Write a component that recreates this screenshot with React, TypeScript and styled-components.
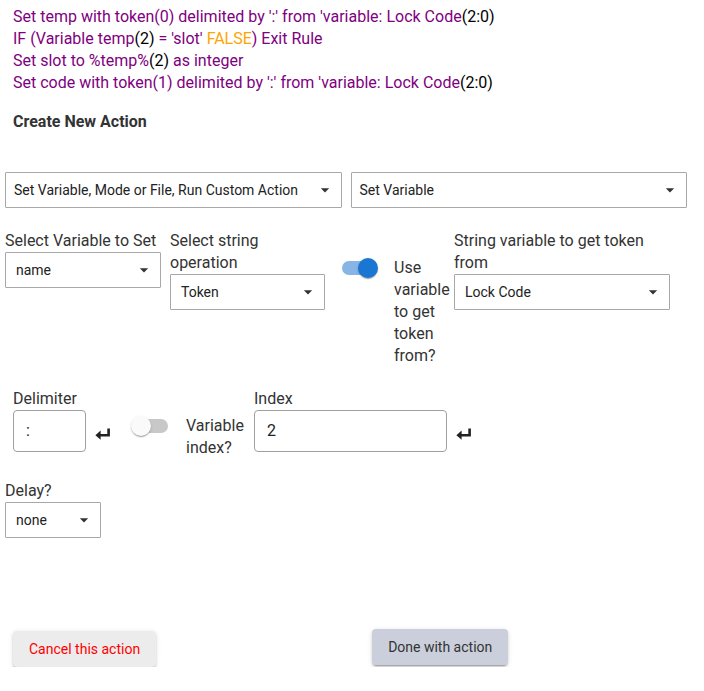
import React from "react";
import styled, { createGlobalStyle } from "styled-components";

const Global = createGlobalStyle`
  body {
    margin: 0;
    background: #ffffff;
    font-family: Roboto, "Liberation Sans", Arial, sans-serif;
    color: #333333;
  }
`;

const Page = styled.div`
  width: 682px;
  padding: 5.5px 0 0 5px;
`;

const Rules = styled.div`
  padding-left: 8px;
  font-size: 16px;
  line-height: 22.3px;
  color: purple;
`;

const Plain = styled.span`
  color: #000000;
`;

const Warn = styled.span`
  color: orange;
`;

const Heading = styled.div`
  margin: 16.3px 0 0 8px;
  font-size: 16px;
  line-height: 22px;
  font-weight: 700;
  color: #333333;
`;

const Row = styled.div<{ $top: number; $indent?: number }>`
  display: flex;
  align-items: flex-start;
  margin-top: ${(p) => p.$top}px;
  padding-left: ${(p) => p.$indent ?? 0}px;
`;

const Field = styled.div<{ $width: number; $ml?: number; $nowrap?: boolean }>`
  display: flex;
  flex-direction: column;
  width: ${(p) => p.$width}px;
  margin-left: ${(p) => p.$ml ?? 0}px;
  flex-shrink: 0;
  ${(p) => (p.$nowrap ? "white-space: nowrap;" : "")}
`;

const Label = styled.div`
  font-size: 16px;
  line-height: 22px;
  color: #333333;
`;

const SelectBox = styled.div<{ $pad?: number; $mt?: number }>`
  position: relative;
  display: flex;
  align-items: center;
  height: 36px;
  box-sizing: border-box;
  margin-top: ${(p) => p.$mt ?? 0}px;
  padding-left: ${(p) => p.$pad ?? 10}px;
  border: 1px solid #a8a8a8;
  border-radius: 1px;
  font-size: 14px;
  color: #222222;
  background: #ffffff;
`;

const Arrow = styled.svg`
  position: absolute;
  right: 6px;
  top: 50%;
  width: 20px;
  height: 20px;
  margin-top: -10px;
  fill: #333333;
`;

const Select = ({ value, pad, mt }: { value: string; pad?: number; mt?: number }) => (
  <SelectBox $pad={pad} $mt={mt}>
    {value}
    <Arrow viewBox="0 0 24 24">
      <path d="M7 10l5 5 5-5z" />
    </Arrow>
  </SelectBox>
);

const TopSelects = styled.div`
  display: flex;
  gap: 9px;
  margin-top: 39px;
  & > * {
    flex: 1;
  }
`;

const SwitchGroup = styled.div<{ $ml: number; $gap: number }>`
  display: flex;
  align-items: flex-start;
  gap: ${(p) => p.$gap}px;
  margin-left: ${(p) => p.$ml}px;
  padding-top: 27px;
  flex-shrink: 0;
`;

const SwitchBox = styled.div`
  position: relative;
  width: 39px;
  height: 22px;
  flex-shrink: 0;
`;

const Track = styled.div<{ $on: boolean }>`
  position: absolute;
  left: 3px;
  top: 4px;
  width: 34px;
  height: 14px;
  border-radius: 7px;
  background: ${(p) => (p.$on ? "#86b5e6" : "#c8c8c8")};
`;

const Thumb = styled.div<{ $on: boolean }>`
  position: absolute;
  top: 1px;
  left: ${(p) => (p.$on ? 19 : 0)}px;
  width: 20px;
  height: 20px;
  border-radius: 50%;
  background: ${(p) => (p.$on ? "#1976d2" : "#fafafa")};
  box-shadow: 0 2px 1px -1px rgba(0, 0, 0, 0.2), 0 1px 1px 0 rgba(0, 0, 0, 0.14),
    0 1px 3px 0 rgba(0, 0, 0, 0.12);
`;

const Switch = ({ on }: { on: boolean }) => (
  <SwitchBox>
    <Track $on={on} />
    <Thumb $on={on} />
  </SwitchBox>
);

const SwitchLabel = styled.div<{ $width: number }>`
  width: ${(p) => p.$width}px;
  font-size: 16px;
  line-height: 22px;
  color: #333333;
`;

const TextInput = styled.div<{ $width: number }>`
  display: flex;
  align-items: center;
  width: ${(p) => p.$width}px;
  height: 42px;
  box-sizing: border-box;
  padding-left: 12px;
  border: 1px solid #a0a0a0;
  border-radius: 4px;
  font-size: 16px;
  color: #222222;
`;

const EnterIcon = styled.svg<{ $ml: number }>`
  width: 16px;
  height: 14px;
  margin: 39px 0 0 ${(p) => p.$ml}px;
  flex-shrink: 0;
`;

const Enter = ({ ml }: { ml: number }) => (
  <EnterIcon $ml={ml} viewBox="0 0 16 14">
    <path
      d="M13.6 1.5V8.2H3"
      fill="none"
      stroke="#222222"
      strokeWidth="2.6"
      strokeLinejoin="miter"
    />
    <path d="M0.4 8.2L5.6 3.6V12.8Z" fill="#222222" />
  </EnterIcon>
);

const Buttons = styled.div`
  display: flex;
  align-items: flex-start;
  margin-top: 93px;
  padding-left: 8px;
`;

const Button = styled.button<{ $primary?: boolean; $ml?: number; $mt?: number }>`
  height: 36px;
  padding: 0 16px;
  margin-left: ${(p) => p.$ml ?? 0}px;
  margin-top: ${(p) => p.$mt ?? 0}px;
  border: none;
  border-radius: 4px;
  font-family: Roboto, "Liberation Sans", Arial, sans-serif;
  font-size: 14px;
  font-weight: 400;
  background: ${(p) => (p.$primary ? "#cacfdb" : "#ececec")};
  color: ${(p) => (p.$primary ? "#333333" : "#ff0000")};
  box-shadow: 0 3px 1px -2px rgba(0, 0, 0, 0.2), 0 2px 2px 0 rgba(0, 0, 0, 0.14),
    0 1px 5px 0 rgba(0, 0, 0, 0.12);
  cursor: pointer;
`;

export default function App() {
  return (
    <>
      <Global />
      <Page>
        <Rules>
          <div>
            Set temp with token(0) delimited by ':' from 'variable: Lock Code<Plain>(2:0)</Plain>
          </div>
          <div>
            IF (Variable temp<Plain>(2)</Plain> = 'slot' <Warn>FALSE</Warn>) Exit Rule
          </div>
          <div>
            Set slot to %temp%<Plain>(2)</Plain> as integer
          </div>
          <div>
            Set code with token(1) delimited by ':' from 'variable: Lock Code<Plain>(2:0)</Plain>
          </div>
        </Rules>

        <Heading>Create New Action</Heading>

        <TopSelects>
          <Select value="Set Variable, Mode or File, Run Custom Action" pad={8} />
          <Select value="Set Variable" pad={8} />
        </TopSelects>

        <Row $top={22}>
          <Field $width={156} $nowrap>
            <Label>Select Variable to Set</Label>
            <Select value="name" />
          </Field>
          <Field $width={155} $ml={9}>
            <Label>Select string operation</Label>
            <Select value="Token" />
          </Field>
          <SwitchGroup $ml={14} $gap={16}>
            <Switch on />
            <SwitchLabel $width={57}>Use variable to get token from?</SwitchLabel>
          </SwitchGroup>
          <Field $width={216} $ml={3}>
            <Label>String variable to get token from</Label>
            <Select value="Lock Code" />
          </Field>
        </Row>

        <Row $top={21} $indent={8}>
          <Field $width={73}>
            <Label>Delimiter</Label>
            <TextInput $width={73}>:</TextInput>
          </Field>
          <Enter ml={9} />
          <SwitchGroup $ml={20} $gap={16}>
            <Switch on={false} />
            <SwitchLabel $width={60}>Variable index?</SwitchLabel>
          </SwitchGroup>
          <Field $width={193} $ml={8}>
            <Label>Index</Label>
            <TextInput $width={193}>2</TextInput>
          </Field>
          <Enter ml={9} />
        </Row>

        <Row $top={21}>
          <Field $width={96}>
            <Label>Delay?</Label>
            <Select value="none" />
          </Field>
        </Row>

        <Buttons>
          <Button $mt={0}>Cancel this action</Button>
          <Button $primary $ml={216} $mt={-2}>
            Done with action
          </Button>
        </Buttons>
      </Page>
    </>
  );
}
